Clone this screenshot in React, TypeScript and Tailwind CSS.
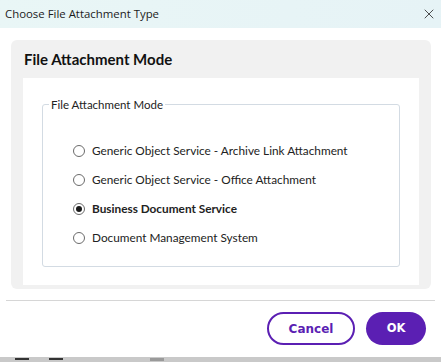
import { X } from "lucide-react";

const options = [
    "Generic Object Service - Archive Link Attachment",
    "Generic Object Service - Office Attachment",
    "Business Document Service",
    "Document Management System",
];

function Radio({ checked }: { checked: boolean }) {
    return (
        <span className="w-[12px] h-[12px] rounded-full border border-[#6b6b6b] bg-white flex items-center justify-center shrink-0">
            {checked && <span className="w-[6px] h-[6px] rounded-full bg-[#1a1a1a]" />}
        </span>
    );
}

export default function App() {
    const selected = 2;

    return (
        <div className="w-[441px] h-[362px] bg-[#c9c9c9] overflow-hidden flex flex-col">
            <div className="h-[357px] shrink-0 bg-white flex flex-col">
                {/* title bar */}
                <div className="h-[28px] shrink-0 bg-gradient-to-r from-[#e9f6f6] to-[#e6f3f6] flex items-center justify-between pl-[5px] pr-[4px]">
                    <span className="text-[11.4px] text-[#1b1b1b]" style={{ fontFamily: '"Open Sans", sans-serif' }}>
                        Choose File Attachment Type
                    </span>
                    <X className="w-[16px] h-[16px] text-[#333]" strokeWidth={1.3} />
                </div>

                <div className="px-[11px] pt-[12px] pr-[10px]">
                    <div className="bg-[#f1f1f1] rounded-[6px] pb-[4px]">
                        <h2
                            className="px-[13px] h-[38px] flex items-center text-[15px] font-bold text-[#111]"
                            style={{ fontFamily: "Lato, sans-serif" }}
                        >
                            File Attachment Mode
                        </h2>
                        <div className="bg-white ml-[12px] mr-[12px] pt-[18px] pb-[18px] px-[19px]">
                            <fieldset
                                className="border border-[#d3dbe3] rounded-[3px] px-[30px] pt-[23px] pb-[14px]"
                                style={{ fontFamily: "Lato, sans-serif" }}
                            >
                                <legend className="px-[2px] ml-[-24px] text-[11.5px] text-[#222]">File Attachment Mode</legend>
                                <div className="flex flex-col">
                                    {options.map((o, i) => (
                                        <label key={o} className="h-[29px] flex items-center gap-[7px] text-[11.8px] text-[#222]">
                                            <Radio checked={i === selected} />
                                            <span className={i === selected ? "font-bold" : ""}>{o}</span>
                                        </label>
                                    ))}
                                </div>
                            </fieldset>
                        </div>
                    </div>
                </div>

                <div className="mx-[6px] mt-[11px] border-t border-[#d6d6d6]" />

                <div className="flex justify-end gap-[11px] pr-[15px] pt-[11px]">
                    <button
                        className="w-[88px] h-[33px] rounded-full border-2 border-[#5b1fb3] text-[#5b1fb3] font-bold text-[12px]"
                        style={{ fontFamily: '"DejaVu Sans", sans-serif' }}
                    >
                        Cancel
                    </button>
                    <button
                        className="w-[60px] h-[33px] rounded-full bg-[#5b1fb3] text-white font-bold text-[11.5px]"
                        style={{ fontFamily: '"DejaVu Sans", sans-serif' }}
                    >
                        OK
                    </button>
                </div>
            </div>

            {/* page behind the dialog */}
            <div className="flex items-start pl-[15px] gap-[20px] pt-[1px]">
                <div className="w-[14px] h-[2px] bg-[#333]" />
                <div className="w-[14px] h-[2px] bg-[#333]" />
                <div className="w-[14px] h-[3px] bg-[#9a9a9a] ml-[67px]" />
            </div>
        </div>
    );
}
